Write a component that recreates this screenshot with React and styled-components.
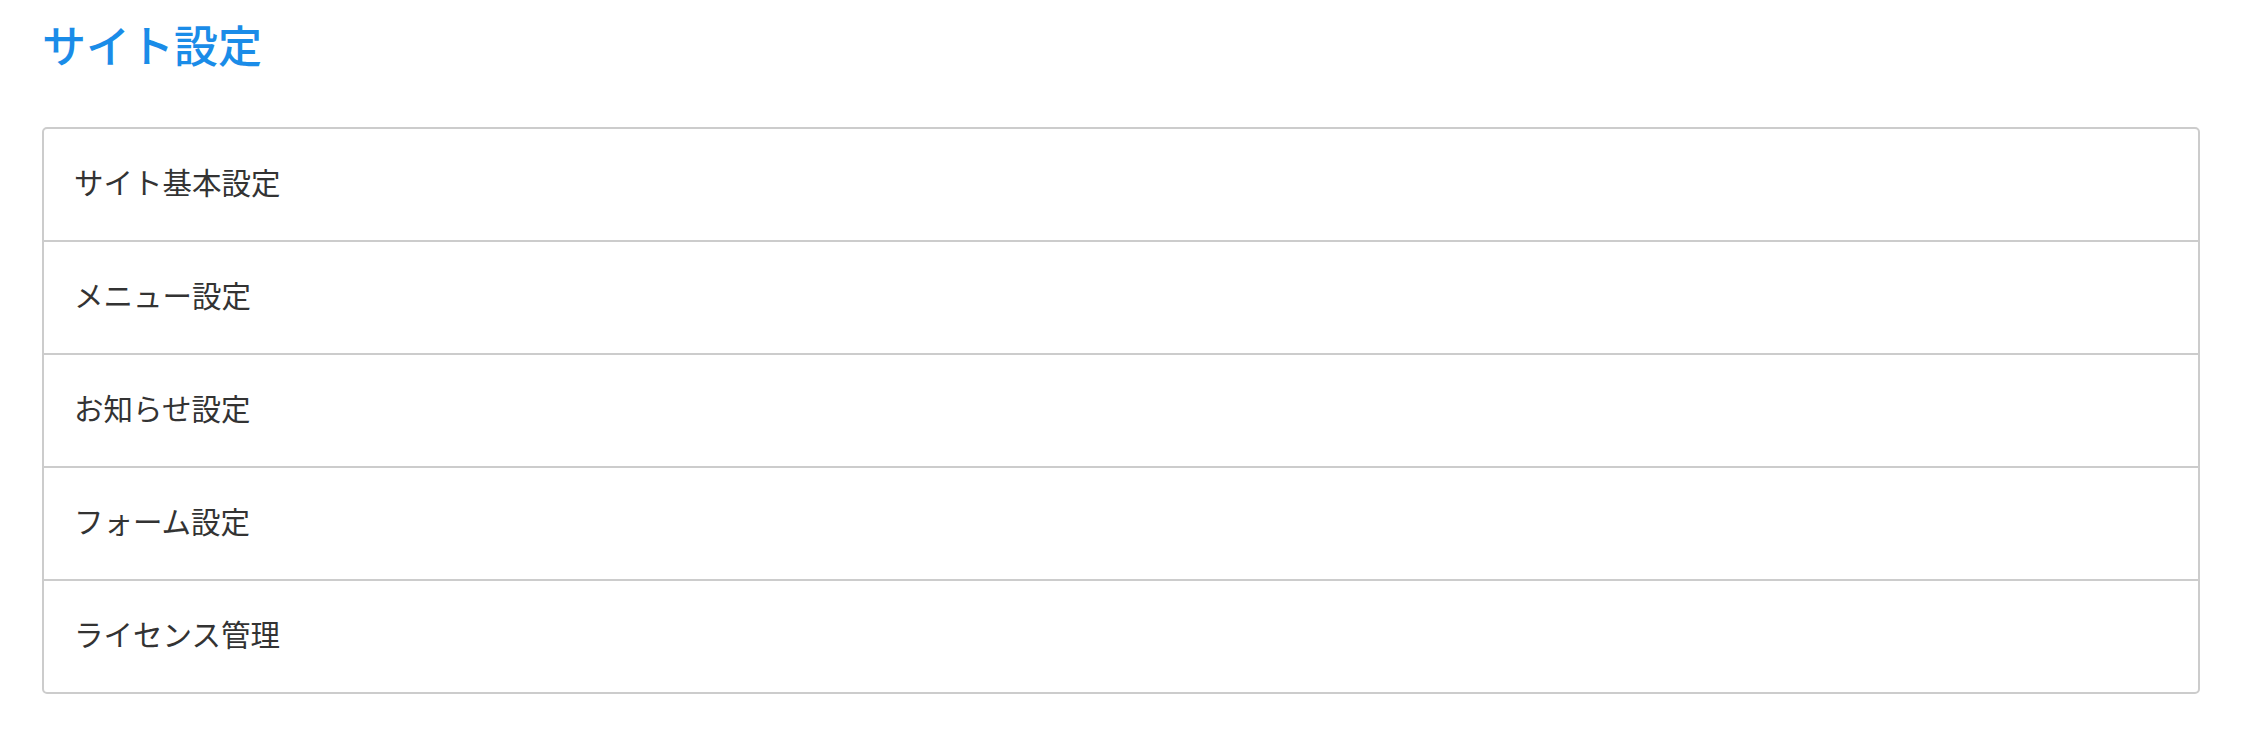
import styled, { createGlobalStyle } from 'styled-components'

const GlobalStyle = createGlobalStyle`
  html, body {
    margin: 0;
    padding: 0;
    background: #fff;
  }
  body {
    font-family: "Noto Sans CJK JP", "Noto Sans", sans-serif;
  }
`

const Page = styled.div`
  padding: 0 42px 40px;
`

const Title = styled.h1`
  margin: 0;
  padding: 18px 0 0;
  height: 127px;
  box-sizing: border-box;
  font-size: 44px;
  line-height: 52px;
  font-weight: 500;
  color: #1a8ce8;
`

const List = styled.ul`
  list-style: none;
  margin: 0;
  padding: 0;
  border: 2px solid #cccccc;
  border-radius: 5px;
  background: #fff;
`

const Item = styled.li`
  height: 103px;
  display: flex;
  align-items: center;
  padding: 0 30px 8px;
  font-size: 29.5px;
  color: #333;
  & + & {
    border-top: 2px solid #cccccc;
  }
`

const items = [
  'サイト基本設定',
  'メニュー設定',
  'お知らせ設定',
  'フォーム設定',
  'ライセンス管理',
]

export default function App() {
  return (
    <>
      <GlobalStyle />
      <Page>
        <Title>サイト設定</Title>
        <List>
          {items.map(label => (
            <Item key={label}>{label}</Item>
          ))}
        </List>
      </Page>
    </>
  )
}
